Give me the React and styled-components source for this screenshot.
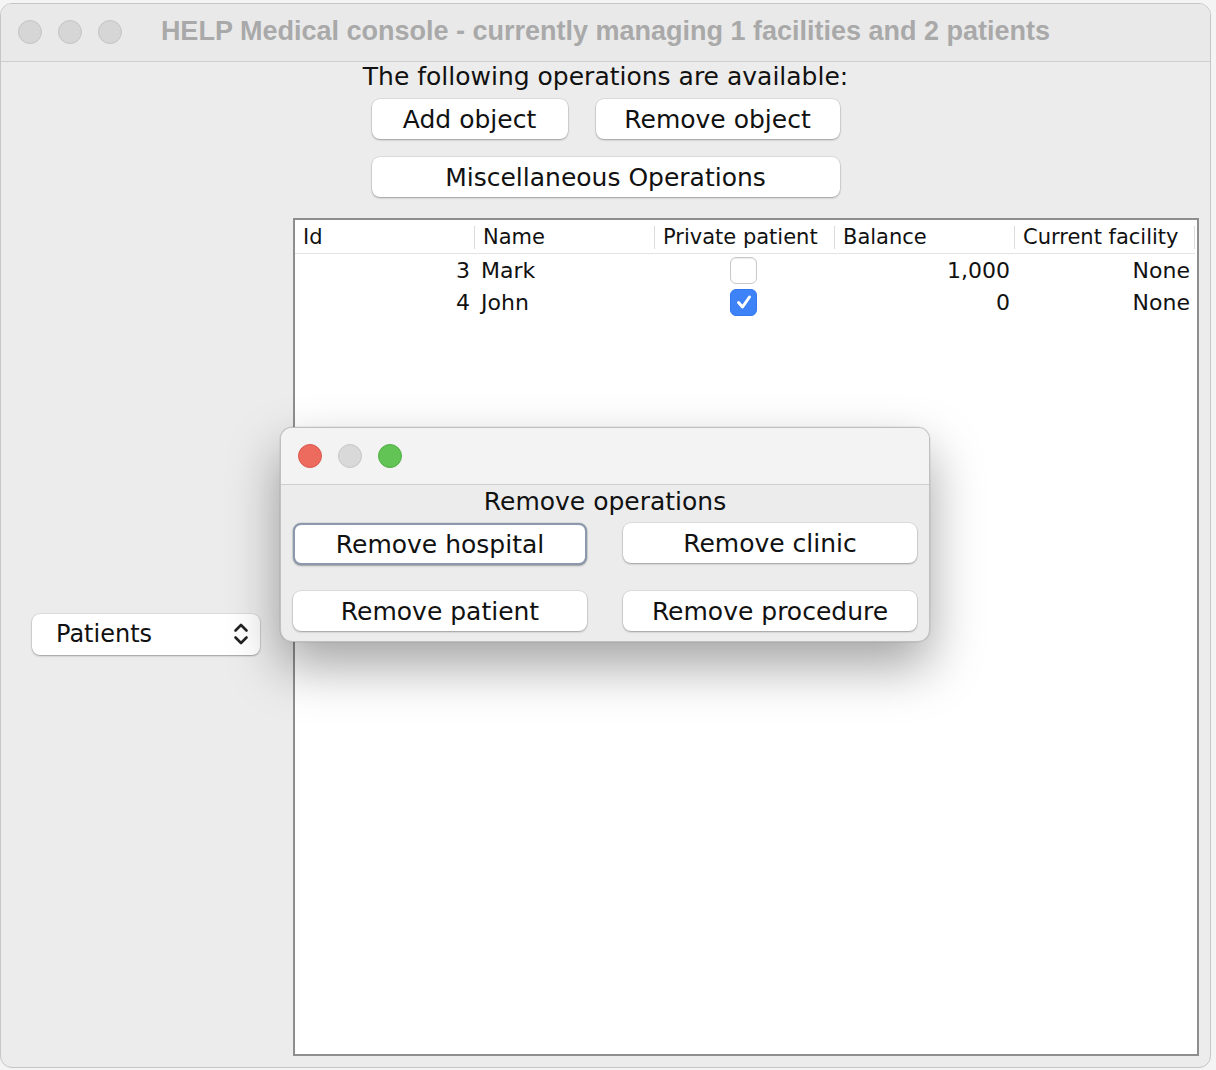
import React from "react";
import styled, { createGlobalStyle } from "styled-components";

const Global = createGlobalStyle`
  html, body {
    margin: 0;
    padding: 0;
    background: #f4f4f4;
  }
  body {
    width: 1216px;
    height: 1070px;
    overflow: hidden;
    font-family: "DejaVu Sans", "Noto Sans", sans-serif;
  }
`;

const Page = styled.div`
  position: relative;
  width: 1216px;
  height: 1070px;
  padding: 3px 5px 2px 0;
  box-sizing: border-box;
`;

const Window = styled.div`
  width: 1211px;
  height: 1065px;
  background: #ececec;
  border: 1px solid #c6c6c6;
  border-radius: 12px;
  box-sizing: border-box;
  display: flex;
  flex-direction: column;
  overflow: hidden;
`;

const TitleBar = styled.div`
  height: ${({ h }) => h}px;
  flex: none;
  display: flex;
  align-items: center;
  padding-left: 17px;
  background: ${({ active }) => (active ? "#f3f3f3" : "#e9e9e9")};
  border-bottom: 1px solid #cfcfcf;
  position: relative;
`;

const Lights = styled.div`
  display: flex;
  gap: 16px;
  margin-top: -1px;
`;

const Light = styled.span`
  width: 24px;
  height: 24px;
  border-radius: 50%;
  box-sizing: border-box;
  background: ${({ color }) => color};
  border: 1px solid ${({ edge }) => edge};
`;

const Title = styled.div`
  position: absolute;
  left: 0;
  right: 0;
  top: 50%;
  transform: translateY(-50%);
  margin-top: -2px;
  text-align: center;
  font-family: "Liberation Sans", Arial, sans-serif;
  font-weight: bold;
  font-size: 27px;
  color: #a9a9a9;
  pointer-events: none;
`;

const TopPanel = styled.div`
  display: flex;
  flex-direction: column;
  align-items: center;
  height: 156px;
  flex: none;
`;

const Label = styled.div`
  font-size: 25px;
  color: #111;
  line-height: 30px;
`;

const ButtonGrid = styled.div`
  display: grid;
  grid-template-columns: 196px 244px;
  column-gap: 28px;
  row-gap: 18px;
  margin-top: 7px;
`;

const Button = styled.button`
  height: ${({ h }) => h || 40}px;
  border-radius: 8px;
  background: #fff;
  border: ${({ focused }) => (focused ? "2px solid #8c98ad" : "none")};
  box-shadow: 0 1px 2px rgba(0, 0, 0, 0.3), 0 0 0 0.5px rgba(0, 0, 0, 0.12);
  font-family: "DejaVu Sans", sans-serif;
  font-size: 25px;
  color: #111;
  padding: 0;
  grid-column: ${({ span }) => (span ? "1 / span 2" : "auto")};
`;

const Body = styled.div`
  flex: 1;
  display: flex;
  padding: 0 11px 11px 0;
`;

const Side = styled.div`
  width: 292px;
  flex: none;
  display: flex;
  align-items: center;
  padding-left: 31px;
  box-sizing: border-box;
`;

const Combo = styled.div`
  width: 228px;
  height: 41px;
  background: #fff;
  border-radius: 8px;
  box-shadow: 0 1px 2px rgba(0, 0, 0, 0.3), 0 0 0 0.5px rgba(0, 0, 0, 0.12);
  display: flex;
  align-items: center;
  justify-content: space-between;
  padding: 0 10px 0 24px;
  box-sizing: border-box;
  font-size: 24px;
  color: #111;
  margin-top: -6px;
`;

const TableBox = styled.div`
  flex: 1;
  background: #fff;
  border: 2px solid #8e8e8e;
`;

const Grid = styled.div`
  display: grid;
  grid-template-columns: repeat(5, 180px);
`;

const Head = styled.div`
  height: 33px;
  display: flex;
  align-items: center;
  padding-left: 8px;
  font-size: 21px;
  color: #111;
  border-bottom: 1px solid #e4e4e4;
  position: relative;
  &::after {
    content: "";
    position: absolute;
    right: 0;
    top: 6px;
    bottom: 4px;
    width: 1px;
    background: #dcdcdc;
  }
`;

const Cell = styled.div`
  height: 32px;
  display: flex;
  align-items: center;
  justify-content: ${({ align }) =>
    align === "right" ? "flex-end" : align === "center" ? "center" : "flex-start"};
  padding: 0 5px 0 6px;
  font-size: 22px;
  color: #111;
`;

const Check = styled.span`
  width: 27px;
  height: 27px;
  border-radius: 6px;
  box-sizing: border-box;
  display: flex;
  align-items: center;
  justify-content: center;
  background: ${({ checked }) => (checked ? "#3d82f7" : "#fff")};
  border: 1px solid ${({ checked }) => (checked ? "#3478f0" : "#c9c9c9")};
  box-shadow: ${({ checked }) => (checked ? "none" : "inset 0 1px 1px rgba(0,0,0,0.08)")};
  margin-right: 4px;
`;

const Dialog = styled.div`
  position: absolute;
  left: 280px;
  top: 427px;
  width: 650px;
  height: 215px;
  background: #ececec;
  border: 1px solid #c0c0c0;
  border-radius: 12px;
  box-sizing: border-box;
  overflow: hidden;
  box-shadow: 0 24px 52px rgba(0, 0, 0, 0.36), 0 0 0 0.5px rgba(0, 0, 0, 0.1);
  display: flex;
  flex-direction: column;
`;

const DialogBody = styled.div`
  display: flex;
  flex-direction: column;
  align-items: center;
  padding-top: 2px;
`;

const DialogGrid = styled.div`
  display: grid;
  grid-template-columns: 294px 294px;
  column-gap: 36px;
  row-gap: 26px;
  margin-top: 6px;
`;

const Chevrons = () => (
  <svg width="18" height="26" viewBox="0 0 18 26" fill="none" stroke="#222" strokeWidth="2.6" strokeLinecap="round" strokeLinejoin="round">
    <path d="M3.5 9.5 L9 4 L14.5 9.5" />
    <path d="M3.5 16.5 L9 22 L14.5 16.5" />
  </svg>
);

const Tick = () => (
  <svg width="18" height="18" viewBox="0 0 18 18" fill="none" stroke="#fff" strokeWidth="3" strokeLinecap="round" strokeLinejoin="round">
    <path d="M3.5 9.5 L7.5 14 L14.5 4" />
  </svg>
);

const rows = [
  { id: 3, name: "Mark", priv: false, balance: "1,000", facility: "None" },
  { id: 4, name: "John", priv: true, balance: "0", facility: "None" },
];

export default function App() {
  return (
    <>
      <Global />
      <Page>
        <Window>
          <TitleBar h={57}>
            <Lights>
              <Light color="#d6d6d6" edge="#c4c4c4" />
              <Light color="#d6d6d6" edge="#c4c4c4" />
              <Light color="#d6d6d6" edge="#c4c4c4" />
            </Lights>
            <Title>HELP Medical console - currently managing 1 facilities and 2 patients</Title>
          </TitleBar>
          <TopPanel>
            <Label>The following operations are available:</Label>
            <ButtonGrid>
              <Button>Add object</Button>
              <Button>Remove object</Button>
              <Button span>Miscellaneous Operations</Button>
            </ButtonGrid>
          </TopPanel>
          <Body>
            <Side>
              <Combo>
                Patients
                <Chevrons />
              </Combo>
            </Side>
            <TableBox>
              <Grid>
                <Head>Id</Head>
                <Head>Name</Head>
                <Head>Private patient</Head>
                <Head>Balance</Head>
                <Head>Current facility</Head>
                {rows.map((r) => (
                  <React.Fragment key={r.id}>
                    <Cell align="right">{r.id}</Cell>
                    <Cell>{r.name}</Cell>
                    <Cell align="center">
                      <Check checked={r.priv}>{r.priv && <Tick />}</Check>
                    </Cell>
                    <Cell align="right">{r.balance}</Cell>
                    <Cell align="right">{r.facility}</Cell>
                  </React.Fragment>
                ))}
              </Grid>
            </TableBox>
          </Body>
        </Window>
        <Dialog>
          <TitleBar h={56} active>
            <Lights>
              <Light color="#ed6a5e" edge="#d9594d" />
              <Light color="#d9d9d9" edge="#c6c6c6" />
              <Light color="#61c454" edge="#52ad45" />
            </Lights>
          </TitleBar>
          <DialogBody>
            <Label>Remove operations</Label>
            <DialogGrid>
              <Button h={42} focused>Remove hospital</Button>
              <Button>Remove clinic</Button>
              <Button>Remove patient</Button>
              <Button>Remove procedure</Button>
            </DialogGrid>
          </DialogBody>
        </Dialog>
      </Page>
    </>
  );
}
